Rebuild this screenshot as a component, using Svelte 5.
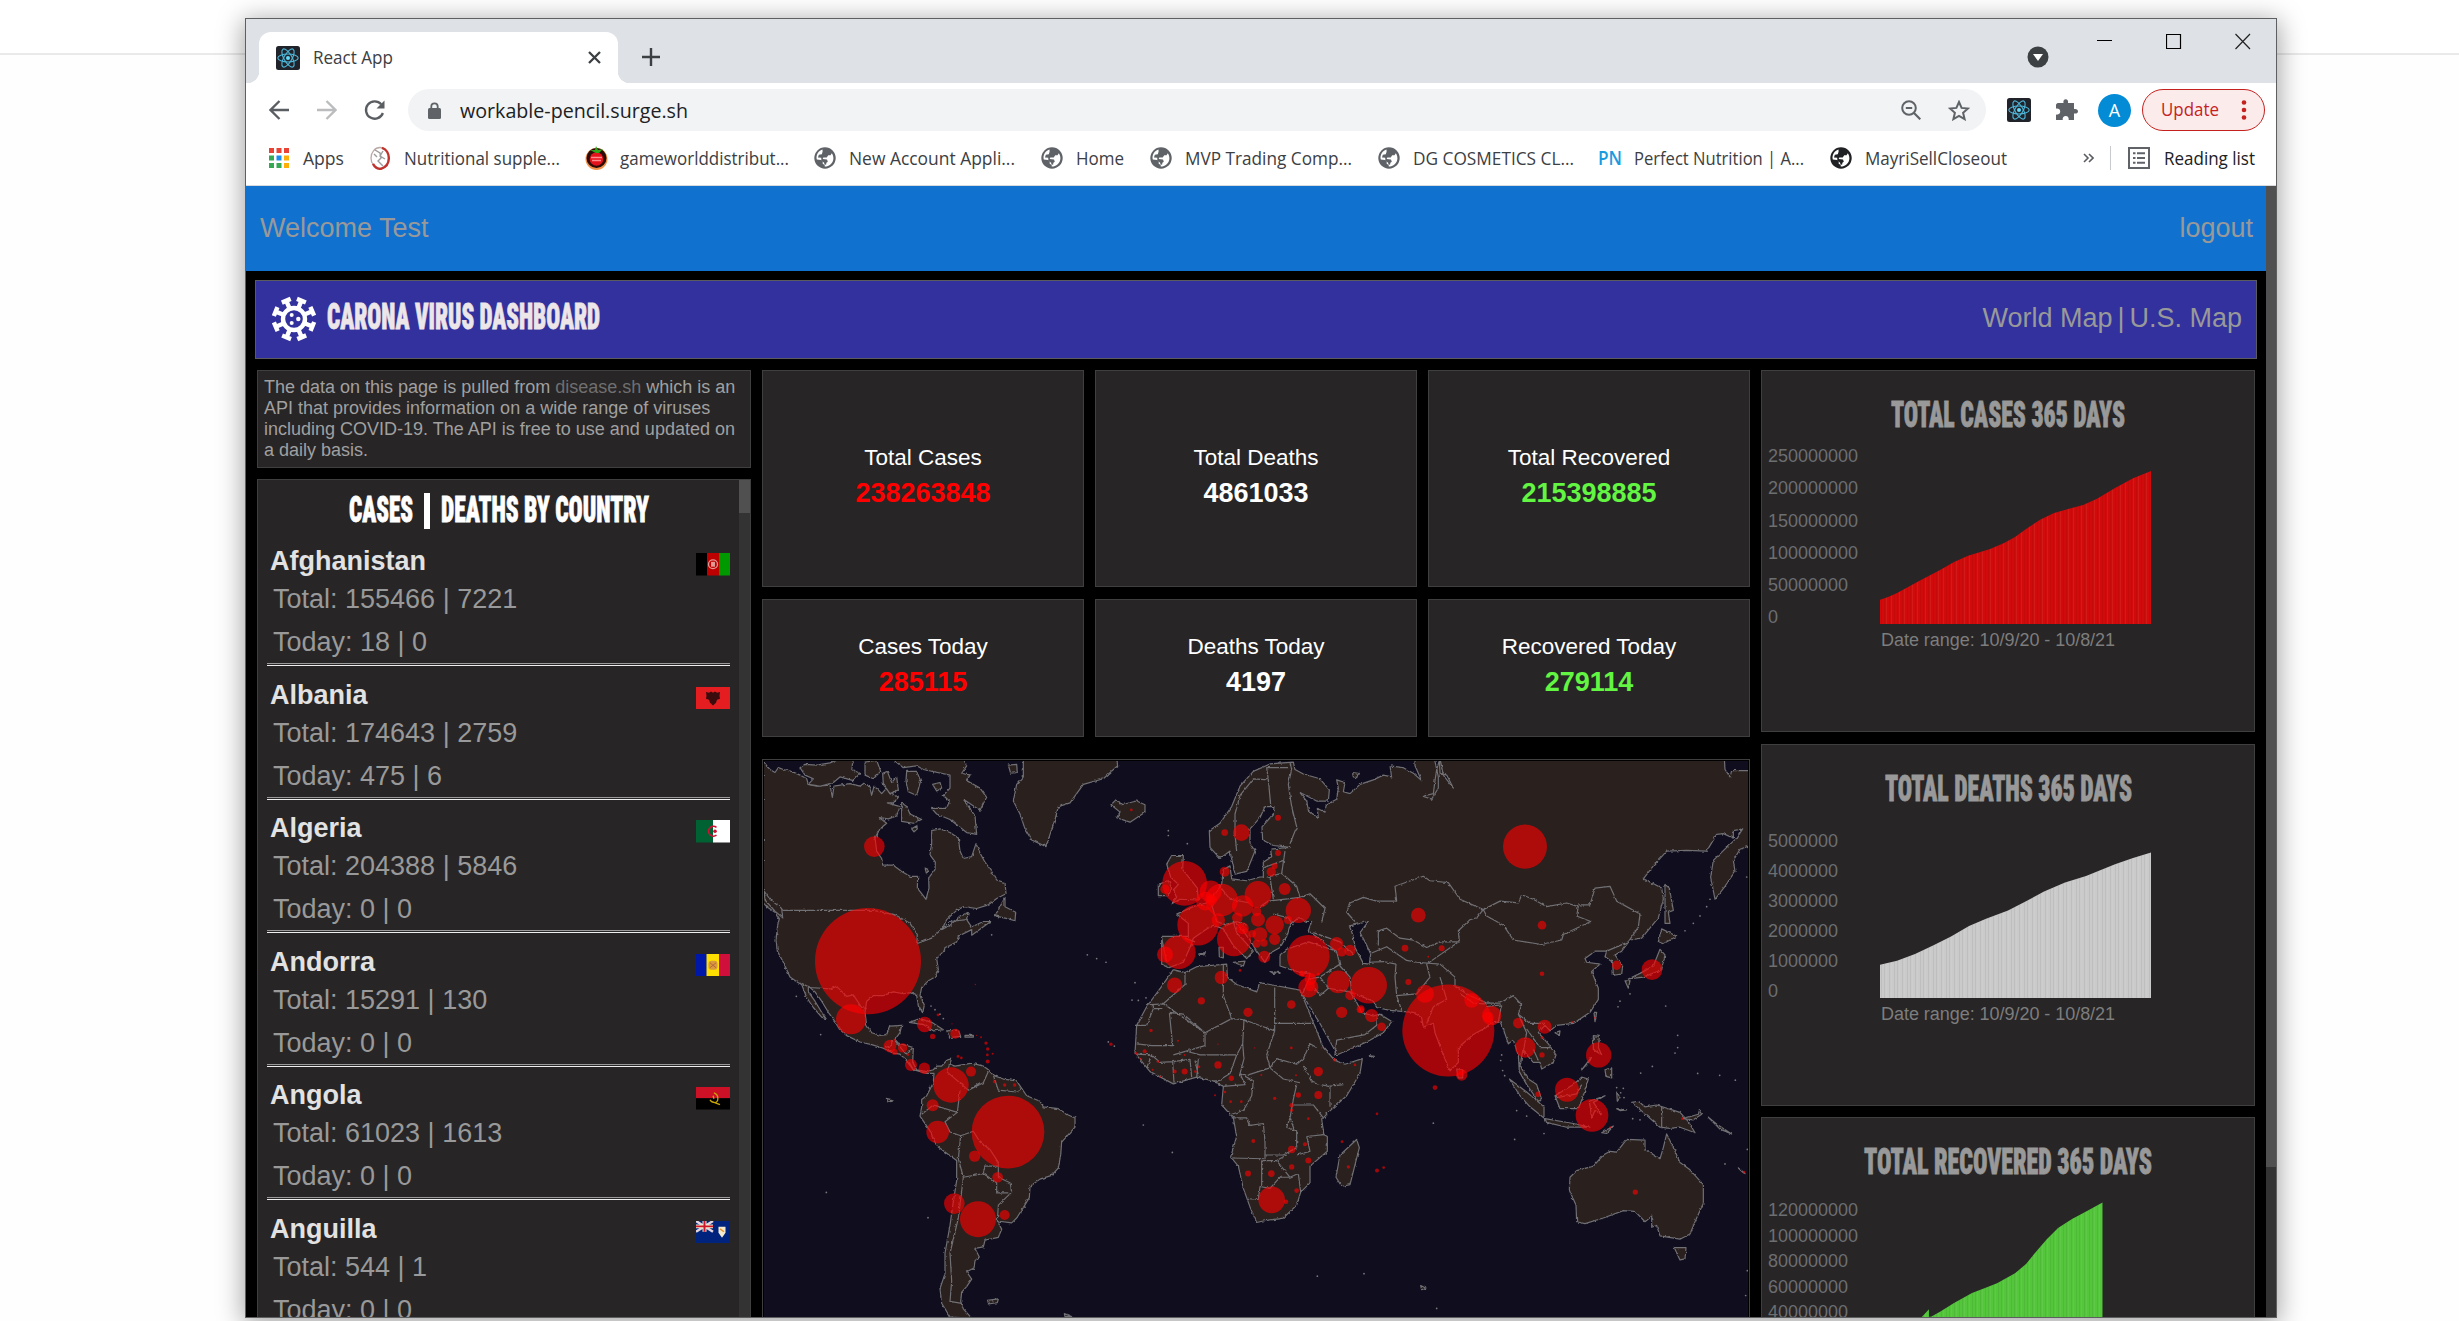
<script>
  const bookmarks = [
    { icon: 'apps', label: 'Apps', width: 41, cell: 101 },
    { icon: 'nutrition', label: 'Nutritional supple...', width: 156, cell: 216 },
    { icon: 'game', label: 'gameworlddistribut...', width: 169, cell: 229 },
    { icon: 'globe', label: 'New Account Appli...', width: 166, cell: 227 },
    { icon: 'globe', label: 'Home', width: 48, cell: 109 },
    { icon: 'globe', label: 'MVP Trading Comp...', width: 167, cell: 228 },
    { icon: 'globe', label: 'DG COSMETICS CL...', width: 161, cell: 221 },
    { icon: 'pn', label: 'Perfect Nutrition | A...', width: 170, cell: 231 },
    { icon: 'earth', label: 'MayriSellCloseout', width: 142, cell: 254 }
  ];

  const countries = [
    { name: 'Afghanistan', total: '155466 | 7221', today: '18 | 0' },
    { name: 'Albania', total: '174643 | 2759', today: '475 | 6' },
    { name: 'Algeria', total: '204388 | 5846', today: '0 | 0' },
    { name: 'Andorra', total: '15291 | 130', today: '0 | 0' },
    { name: 'Angola', total: '61023 | 1613', today: '0 | 0' },
    { name: 'Anguilla', total: '544 | 1', today: '0 | 0' }
  ];

  const stats = [
    { label: 'Total Cases', value: '238263848', tone: 'red' },
    { label: 'Total Deaths', value: '4861033', tone: 'white' },
    { label: 'Total Recovered', value: '215398885', tone: 'green' },
    { label: 'Cases Today', value: '285115', tone: 'red' },
    { label: 'Deaths Today', value: '4197', tone: 'white' },
    { label: 'Recovered Today', value: '279114', tone: 'green' }
  ];

  const charts = [
    {
      title: 'TOTAL CASES 365 DAYS', width: 234, kind: 'cases', step: 32.3,
      labels: ['250000000', '200000000', '150000000', '100000000', '50000000', '0'],
      area: 'M0,153V128.700L8,126 17,122 28,116 39,110 60,99 74,91 88,84.700 110,78 124,72 135,66 146,58 160,48.700 174,42 188,38 203,34 217,27.700 235,17 253,7.300 271,0V153Z'
    },
    {
      title: 'TOTAL DEATHS 365 DAYS', width: 247, kind: 'deaths', step: 30,
      labels: ['5000000', '4000000', '3000000', '2000000', '1000000', '0'],
      area: 'M0,153V119.700L17,115.700 35,109 53,100.500 71,91.500 89,81 106,73.700 128,65.500 146,56.300 164,46.500 185,37.500 206,31 235,19.300 253,13 271,7.500V153Z'
    },
    {
      title: 'TOTAL RECOVERED 365 DAYS', width: 288, kind: 'recovered', step: 25.6,
      labels: ['120000000', '100000000', '80000000', '60000000', '40000000'],
      area: 'M42,98.700 49,91.300V98.700H51L60,93.700 74,85 92,75 105,70 117,65.300 135,55.300 146,46 156,33.700 167,21 178,10 192,1 207,-7 222.500,-15.500V153H0V118Z'
    }
  ];

  // Coastlines, west of the map's centre
  const westLand = [
    'M40,57 52,72 60,80 75,88 85,75 100,80 125,85 150,95 170,105 175,120 200,125 240,122 247,155 252,125 300,118 330,125 345,115 360,130 365,150 372,125 385,135 395,145 410,130 420,145 445,155 430,170 412,170 450,180 440,205 415,213 388,210 410,225 390,240 375,265 380,300 395,320 398,338 430,338 455,355 480,368 503,368 502,400 515,415 528,430 537,400 536,372 555,350 556,330 540,310 545,280 545,245 570,240 600,250 625,265 630,300 640,320 665,315 678,280 690,305 705,330 725,355 740,378 765,385 768,415 740,428 715,445 680,455 640,450 620,460 590,485 575,512 600,500 630,475 655,465 650,485 665,505 700,490 722,490 665,527 665,512 625,530 620,545 600,555 585,560 583,568 560,590 565,620 555,640 535,650 515,668 510,690 523,715 518,737 505,715 500,690 485,682 460,685 430,680 400,690 370,690 350,705 345,735 350,770 365,790 390,797 410,795 420,772 455,770 450,790 435,808 445,818 470,825 490,830 488,870 500,890 530,895 550,890 560,880 575,880 590,865 605,858 600,875 615,880 665,872 700,880 715,890 730,905 760,915 800,920 815,940 830,960 870,975 880,990 925,995 955,1012 975,1020 975,1045 955,1065 935,1085 932,1120 925,1155 905,1175 870,1185 840,1205 838,1235 820,1262 800,1290 785,1303 742,1298 755,1320 745,1342 705,1350 700,1368 675,1372 688,1395 675,1405 672,1425 650,1435 665,1455 650,1475 635,1490 632,1515 640,1535 665,1560 600,1557 575,1520 570,1480 585,1440 585,1385 600,1310 610,1245 620,1190 620,1135 590,1115 560,1095 540,1055 510,1015 515,990 515,970 530,960 550,925 552,900 530,900 490,890 465,860 450,848 430,845 400,832 365,822 330,815 290,798 268,780 255,760 235,735 215,705 195,680 180,668 175,665 175,680 195,705 215,735 228,752 215,748 190,722 170,695 155,660 145,655 120,640 100,600 82,570 78,540 83,500 88,482 75,465 50,450 40,440Z',
    'M150,75 165,66 200,68 240,62 270,50 310,50 305,80 330,90 310,110 270,100 250,115 210,125 175,120 190,105 165,95Z',
    'M425,50 460,75 500,70 520,80 600,95 600,130 580,150 598,165 590,185 545,185 560,200 600,215 650,250 680,255 675,205 640,160 690,190 710,155 690,130 650,110 660,95 635,90 650,70 640,50Z',
    'M470,85 500,85 512,110 500,150 475,140 468,110Z',
    'M345,60 380,55 392,85 370,105 345,95Z', 'M398,90 412,85 425,115 440,100 445,135 420,145 400,120Z',
    'M455,170 470,180 480,200 515,215 490,225 455,220Z', 'M485,240 500,232 502,240 492,248Z', 'M548,120 570,115 575,130 560,138Z',
    'M525,346 535,350 530,362Z',
    'M820,50 820,100 800,120 790,165 810,200 825,240 845,270 888,288 900,255 915,215 925,180 960,170 1000,120 1060,105 1103,70 1100,50Z',
    'M775,68 800,66 802,88 782,90Z',
    'M1083,175 1100,160 1115,175 1160,165 1185,175 1185,195 1140,222 1100,210 1110,195Z',
    'M765,425 735,475 775,483 795,488 797,465 765,450Z',
    'M478,762 510,752 545,762 580,782 550,785 520,768Z', 'M590,785 625,783 632,800 600,803Z', 'M645,797 670,797 670,802 645,802Z',
    'M712,1512 745,1508 742,1518 715,1522Z', 'M408,967 430,972 415,978Z', 'M943,1548 965,1556 945,1556Z',
    'M42,408 60,430 95,455 98,480 75,462 45,432Z',
    'M1265,442 1290,430 1345,432 1342,400 1318,372 1298,350 1300,312 1265,312 1250,335 1262,370 1285,390 1270,405 1280,425Z',
    'M1225,420 1225,390 1255,380 1265,400 1255,420Z',
    'M1407,560 1420,560 1420,588 1408,585Z', 'M1450,600 1485,597 1480,610Z', 'M1346,578 1366,574 1362,580Z',
    'M1270,620 1305,628 1340,612 1430,605 1432,640 1460,660 1520,680 1530,655 1560,660 1650,675 1680,740 1720,830 1755,865 1785,875 1837,860 1830,900 1790,960 1735,1005 1715,1025 1722,1065 1732,1070 1732,1110 1680,1150 1680,1195 1652,1220 1640,1255 1600,1290 1540,1298 1520,1302 1500,1260 1480,1210 1465,1150 1442,1125 1460,1070 1450,1020 1415,985 1420,935 1390,920 1340,910 1270,928 1200,895 1155,845 1160,770 1190,720 1235,665Z'
  ];
  const westBorders = [
    'M97,460H370L435,472 480,495 502,525 500,550 545,535 600,490 650,485',
    'M155,657 180,668 240,672 260,665 290,692 310,688 335,722 350,725', 'M425,810V825L405,830', 'M435,812 470,850 488,830M490,890 478,870',
    'M600,870 590,895 655,945 700,925 715,895M730,905 745,945 800,950 815,940M655,945 690,925M630,945 622,1005 550,985 515,1010M622,1005 585,1030 600,1058 632,1068 670,1056 690,1085 720,1105 745,1140 745,1180 780,1195 785,1220 745,1255 742,1298M632,1068 625,1130 640,1180 700,1170 705,1150 745,1150M640,1180 625,1290 600,1385 605,1460 600,1515 635,1520M700,1170 740,1195 740,1222 775,1222',
    'M1305,628V660L1240,712 1190,715M1420,605V690L1445,752 1365,790 1240,712M1210,715V725H1237M1210,725 1190,770H1155M1258,735 1268,825H1205L1160,820M1258,735 1300,740 1365,790 1365,825 1270,850M1365,790 1445,752 1482,755 1478,820 1460,850 1350,850 1310,840M1160,848 1205,850 1230,870 1268,868 1272,925M1205,850 1190,885M1268,868 1320,862 1325,910M1335,865 1345,905M1345,860 1340,912M1460,850 1440,900 1395,925M1478,820 1482,860 1470,900 1485,930 1420,935M1482,755 1574,785M1574,668V765H1695M1574,765V785L1550,850 1560,885 1490,905M1470,900 1510,920 1505,960 1480,1000 1445,1010M1445,1020H1490L1500,1040 1540,1035 1545,1085V1130L1442,1128M1560,885 1600,915 1650,925M1560,885 1580,860 1640,875 1660,860 1680,820 1700,830M1660,880 1690,925 1735,935 1780,930M1740,935V990M1640,930 1630,970 1620,1020 1632,1050M1630,985 1690,985 1720,1020M1545,1085 1545,1120 1600,1120 1640,1100 1640,1055 1610,1045 1620,1020M1670,1070 1722,1065M1670,1070 1680,1110 1640,1120M1535,1135H1580L1620,1180 1590,1180 1560,1210 1530,1205 1525,1240 1495,1238M1535,1135V1205M1580,1135 1610,1120M1620,1180 1645,1170 1652,1220',
    'M1235,535 1250,600M1305,535 1335,545M1385,445 1400,490 1430,500 1460,490 1490,500M1405,390 1440,430 1500,440'
  ];
  // Coastlines, east of the map's centre; the group that draws them is shifted
  const eastLand = [
    'M-92,245 -60,225 -25,180 0,125 40,85 90,65 160,60 165,80 190,92 240,105 268,135 265,165 230,165 180,142 200,165 205,190 235,212 232,185 255,195 258,175 290,160 295,130 290,108 315,115 310,140 330,145 360,120 400,108 430,95 455,100 450,70 490,75 520,90 545,110 525,70 525,50 583,50 595,100 595,130 575,160 548,152 580,145 585,110 590,80 600,50 610,95 640,130 620,95 600,90 598,50 1453,50 1455,80 1470,100 1475,83 1530,83 1530,285 1500,295 1480,325 1485,355 1455,395 1425,430 1412,370 1420,325 1460,290 1490,265 1508,240 1480,245 1480,265 1450,253 1430,255 1400,300 1340,298 1280,300 1240,340 1210,375 1245,390 1265,400 1270,430 1255,480 1205,535 1170,540 1145,570 1125,580 1148,610 1145,632 1120,635 1118,600 1095,585 1100,570 1065,570 1035,590 1040,600 1080,605 1055,625 1075,670 1075,700 1050,735 1000,765 950,770 930,785 915,770 895,790 925,820 948,850 940,870 905,888 900,870 880,870 860,850 848,840 840,880 865,915 890,930 905,970 895,975 860,930 838,895 835,850 820,810 805,820 790,780 780,760 750,765 740,775 700,795 655,830 655,870 630,893 610,850 585,790 580,765 550,775 545,750 520,735 450,730 410,722 400,705 330,680 345,700 365,735 400,745 420,740 455,760 430,790 380,815 290,850 280,830 240,765 215,730 190,690 185,690 205,650 210,630 180,628 120,610 120,580 140,565 205,545 290,570 250,545 205,515 215,490 200,490 175,480 150,500 140,530 120,560 100,570 90,575 75,600 50,570 30,540 0,505 -20,490 -10,520 40,570 20,590 -20,555 -50,510 -80,500 -100,510 -140,535 -150,560 -170,600 -215,615 -235,605 -235,530 -180,530 -155,530 -155,495 -190,470 -140,450 -100,440 -70,410 -55,390 -50,350 -30,340 -25,375 20,380 60,370 70,370 70,330 95,315 92,295 150,290 100,285 68,270 66,235 100,200 102,180 75,180 60,210 30,240 30,280 45,300 20,355 -15,362 -30,300 -60,320 -90,290Z',
    'M350,1078 358,1100 330,1200 305,1205 288,1180 300,1120Z',
    'M990,1180 1010,1162 1060,1150 1090,1120 1110,1110 1130,1112 1160,1078 1215,1080 1215,1105 1260,1130 1270,1100 1280,1063 1300,1100 1320,1140 1350,1160 1390,1200 1390,1250 1365,1300 1350,1333 1320,1347 1260,1338 1250,1310 1235,1315 1235,1285 1215,1300 1185,1272 1150,1270 1090,1290 1035,1305 1010,1300 1008,1255 988,1215Z',
    'M1303,1370 1338,1370 1335,1400 1320,1403Z',
    'M1175,978 1195,975 1215,990 1250,985 1320,1005 1345,1030 1365,1060 1320,1045 1290,1048 1260,1045 1210,1005Z',
    'M1330,1022 1375,1010 1378,1000 1385,1010 1360,1025Z', 'M1405,1018 1435,1040 1475,1063 1440,1050Z', 'M1495,1155 1515,1170 1510,1168Z',
    'M808,915 860,950 912,990 912,1020 870,990 840,960Z', 'M915,1022 1000,1035 1050,1045 980,1045 920,1032Z',
    'M945,960 1000,930 1025,910 1045,915 1030,960 1015,995 960,995Z', 'M1048,975 1095,960 1060,978 1085,1010 1065,1000 1055,1020Z',
    'M1060,798 1078,800 1075,830 1085,850 1060,835Z', 'M1095,890 1115,885 1115,912 1098,908Z', 'M1025,890 1055,855 1050,865Z',
    'M1130,950 1140,965 1132,975Z', 'M1130,995 1160,998 1140,1000Z', 'M1085,1060 1120,1042 1100,1062Z',
    'M1265,510 1310,530 1270,550 1255,545Z', 'M1260,565 1275,580 1265,620 1210,640 1165,645 1200,630 1240,610Z', 'M1155,650 1170,650 1165,670Z',
    'M1275,390 1288,400 1300,460 1285,465 1290,495 1275,495Z', 'M650,888 668,890 668,912 655,912Z', 'M945,790 960,785 958,797Z', 'M1062,735 1070,735 1065,760Z',
    'M90,625 120,628 100,630Z', 'M180,630 200,625 190,635Z', 'M388,852 400,854 390,856Z', 'M542,1472 560,1480 545,1483Z', 'M338,88 355,90 350,102 340,100Z'
  ];
  const eastBorders = [
    'M150,60 155,80 145,120 155,180 170,235 150,280M-15,255 -15,200 0,150 40,105 85,108 92,175M85,108 80,75 145,75M-10,300 -15,255',
    'M70,345 130,325M75,372 125,360 135,300M125,360 170,395 180,425 85,435 60,450M180,425 210,415 255,455 245,490M100,470 145,480 160,500M90,370 100,430',
    'M220,520 300,545 340,580M290,570 300,610 330,640 335,680M205,645 240,640 300,605M240,640 265,670 330,680M225,670 240,690 265,670M285,850 290,810 375,795 410,770 412,745',
    'M345,490 320,465 330,440 370,425 410,435 470,435 465,395 550,368 570,380 625,385 660,430 730,458 710,480 690,485 655,515 658,545 600,545 560,560 520,540 480,535 440,508 415,515V555M730,458 780,435 835,440 845,418 880,430 920,450 980,440 1015,450 1010,475 1052,490 970,525 965,540 905,552 820,540 790,500 740,475ZM1015,445 1050,445 1065,400 1110,395 1130,435 1200,470 1195,505 1165,545 1100,570M395,575 440,558 500,595 530,600M390,600 430,598 468,605 465,640 470,690 485,730M470,690 530,685 570,640 560,605 655,545M530,600 600,605 645,640 645,665 690,690 740,710 780,710 820,690 845,715 835,740 870,765 915,765M600,640 620,700 580,720 560,765M660,685 700,710 735,712M735,720 785,715 775,760M835,740 860,790 850,840M860,780 900,830 930,830M880,835 895,865M1265,990V1048M950,965 1010,955 1025,930'
  ];
  const caspian = 'M328,502 385,490 360,520 378,550 392,578 388,605 370,603 345,560 340,530Z';

  // [x, y, radius]
  const westBubbles = [
    [354,597,159],[303,754,45],[373,288,31],[603,931,53],[774,1058,109],[563,1058,34],[548,986,18],[663,895,15],[674,1123,17],[743,1180,16],[613,1251,31],[684,1293,54],[764,1282,15],
    [524,768,23],[616,793,15],[548,800,8],[420,826,19],[458,831,14],[483,877,18],[523,886,17],[434,842,9],[474,849,4],[564,742,4],[734,922,5],[764,931,5],[794,931,5],[693,802,3],[708,818,5],[713,834,5],[712,850,4],[713,868,6],[728,847,3],[624,854,4],[634,858,4],[680,797,2],[676,660,2],[606,766,2],[434,810,4],
    [1144,189,4],[1424,250,10],[1474,250,25],[1424,356,15],[1304,387,67],[1245,403,14],[1382,409,33],[1415,432,49],[1366,435,28],[1344,499,62],[1287,573,50],[1245,579,24],[1405,486,20],[1452,538,51],[1478,448,32],[1524,417,40],[1524,485,21],[1478,508,18],[1462,480,16],[1385,432,16],[1543,585,18],[1414,641,20],[1274,662,23],[1354,704,11],[1494,735,14],[1470,622,4],
    [1203,784,5],[1284,812,3],[1404,821,2],[1514,831,2],[1184,840,6],[1158,846,4],[1172,860,3],[1224,868,4],[1208,890,3],[1230,909,3],[1274,895,6],[1304,895,9],[1304,850,3],[1336,895,4],[1347,882,4],[1404,877,11],[1444,913,8],[1425,950,4],[1395,959,3],[1442,976,4],[1474,976,4],[1534,904,3],[1510,1082,6],[1494,1170,9],[1083,821,5]
  ];
  const eastBubbles = [
    [114,210,9],[114,305,9],[104,340,9],[94,356,14],[134,402,18],[175,460,38],[104,499,28],[144,486,12],[60,525,22],[104,538,17],[37,523,11],[50,550,12],[72,548,11],[50,463,14],[205,584,64],[290,550,20],[330,568,17],[305,572,14],[295,653,34],[386,662,55],[205,668,30],[212,645,18],[210,665,15],[186,630,9],[331,689,15],[235,632,5],[362,727,12],[363,729,9],[395,744,20],[425,774,13],[305,735,17],[154,714,13],
    [495,562,10],[535,473,22],[605,562,9],[565,585,3],[505,653,9],[555,685,27],[625,784,138],[695,703,22],[755,744,29],[745,748,16],[665,904,17],[663,902,8],[585,938,7],[835,764,16],[856,830,31],[914,774,21],[906,850,8],[906,803,4],[906,631,7],[906,500,13],[855,288,66],[1130,608,14],[1236,620,31],[1076,850,38],[981,944,36],[1056,1013,49],[894,956,8],[996,761,3],[1065,750,3],[1111,1045,3],[1186,1220,8],[1327,1022,4],[1512,1166,4],
    [154,831,4],[168,905,3],[235,895,14],[284,863,5],[345,877,4],[245,831,2],[335,832,2],[235,958,12],[175,958,8],[104,967,5],[155,986,7],[155,999,5],[205,1022,4],[195,1091,6],[155,1105,11],[155,1152,8],[205,1135,9],[94,1170,10],[170,1216,7],[95,1241,40],[138,1246,7],[325,1152,5],[411,1162,6],[431,1154,4],[411,1009,4],[306,1084,4]
  ];
  const specks = [[1012,580],[1040,590],[1068,600],[1155,655],[1146,702],[1165,703],[1188,696],[139,692],[212,795],[229,1221],[534,1289],[725,526],[1180,1039],[1267,1113],[1255,245],[1255,258],[1312,280],[1075,815],[1093,826],[543,718],[555,728],[570,740],[580,752],
    [1702,1447],[1842,1440],[2060,1534],[2050,1034],[2294,1078],[2382,1062],[2747,718],[2783,797],[2783,830],[2775,845],[2707,881],[2672,899],[2843,900],[2909,905],[2956,918],[2255,850],[2252,865],[2258,892],[2264,906],[2604,720],[2610,705],[2640,685],[2880,430],[2870,450],[2850,475],[2830,495],[2805,515],[2990,370],[2992,1105],[2992,1432],[2987,1499],[2925,1144],[2600,938],[2620,940],[2612,952],[2622,965],[2300,1000],[2330,1015],[2648,1022],[2670,1025]];
</script>

{#snippet fit(text, width, size, base, height, kind)}
  <svg class="fit {kind}" {width} {height}>
    <text x="0" y={base} font-size={size} textLength={width} lengthAdjust="spacingAndGlyphs">{text}</text>
  </svg>
{/snippet}

{#snippet atom(size)}
  <svg width={size} height={size} viewBox="0 0 24 24">
    <rect width="24" height="24" rx="2.5" fill="#20232a" />
    <g fill="none" stroke="#4fb9dc" stroke-width="1.1">
      <ellipse cx="12" cy="12" rx="10.2" ry="4" />
      <ellipse cx="12" cy="12" rx="10.2" ry="4" transform="rotate(60 12 12)" />
      <ellipse cx="12" cy="12" rx="10.2" ry="4" transform="rotate(120 12 12)" />
    </g>
    <circle cx="12" cy="12" r="2" fill="#61dafb" />
  </svg>
{/snippet}

{#snippet globe(color)}
  <svg width="22" height="22" viewBox="0 0 22 22">
    <circle cx="11" cy="11" r="10.7" fill={color} />
    <path d="M8.5 2.6C5 3.600 2.500 7 2.500 11l.3 1.500 4.200.5 1.700 1.800v2l2 1.200v1.600c4.500 0 8.600-3.500 8.700-8.400 0-2-.7-3.800-1.600-5l-1.300 2h-2.300l-1.500 2.300H9.300l-.6 1.500 4.300.5.8 2.200-1.400 1.100-.3 1.900-1.600-.1-.4-1.800-2.700-2.300-.2-2.700L4 10.500l.8-2.800 3-.4.8-2.500z" fill="#fff" />
  </svg>
{/snippet}

{#snippet bookmarkIcon(kind)}
  {#if kind === 'apps'}
    <svg width="20" height="20" viewBox="0 0 20 20">
      <path d="M0 0h5v5H0zM7.500 0h5v5h-5zM15 0h5v5h-5z" fill="#ea4335" />
      <path d="M0 7.500h5v5H0zM0 15h5v5H0zM7.500 15h5v5h-5z" fill="#34a853" />
      <path d="M7.500 7.500h5v5h-5z" fill="#1a8cf0" /><path d="M15 7.500h5v5h-5zM15 15h5v5h-5z" fill="#fbaf08" />
    </svg>
  {:else if kind === 'nutrition'}
    <svg width="22" height="24" viewBox="0 0 22 24">
      <ellipse cx="11" cy="12" rx="9" ry="10.500" fill="#fff" stroke="#b9a9a7" stroke-width="1.300" />
      <path d="M13 1.800c9 3 9.500 18-1 21-3.500.4-6-1.500-8-5" fill="none" stroke="#c0332c" stroke-width="2.400" />
      <path d="M6 4l5 3 1 5-3 3 5 5M14 5l-3 5 5 3M5 8l3 3" fill="none" stroke="#9b9b9b" stroke-width="1.400" />
    </svg>
  {:else if kind === 'game'}
    <svg width="23" height="24" viewBox="0 0 23 24">
      <circle cx="11.500" cy="13" r="11" fill="#f0914a" /><circle cx="11.500" cy="12" r="10" fill="#2a0c08" />
      <circle cx="11.500" cy="13" r="6.800" fill="#e4131b" /><path d="M6 11.500h11M7 14.500h9" stroke="#ff8d8d" stroke-width="1.300" />
      <path d="M11 7L5 4l5 0 1-4 2 4 5-1-4 4z" fill="#2ea31c" />
    </svg>
  {:else if kind === 'pn'}
    {@render fit('PN', 24, 19, 19, 24, 'pn')}
  {:else if kind === 'earth'}
    {@render globe('#202124')}
  {:else}
    {@render globe('#5f6368')}
  {/if}
{/snippet}

{#snippet flag(name)}
  <svg class="flag" width="34" height="22.500" viewBox="0 0 34 23" preserveAspectRatio="none">
    {#if name === 'Afghanistan'}
      <path d="M0 0h11.500v23H0z" /><path d="M11 0h12v23H11z" fill="#bf0000" /><path d="M23 0h11v23H23z" fill="#009a00" />
      <circle cx="17" cy="11.500" r="4.500" fill="none" stroke="#e29a94" stroke-width="1.300" /><path d="M15 9h4v5h-4z" fill="#e29a94" />
    {:else if name === 'Albania'}
      <path d="M0 0h34v23H0z" fill="#e41e20" /><path d="M10 5l3 1 2-1.500 2 1.500 2-1.500 2 1.500 3-1-.5 4 .5 3-3 1-1 3-3 3-3-3-1-3-3-1 .5-3z" fill="#3a0c0d" />
    {:else if name === 'Algeria'}
      <path d="M0 0h17v23H0z" fill="#006233" /><path d="M17 0h17v23H17z" fill="#fff" />
      <path d="M20.500 7.500a5 5 0 1 0 0 8" fill="none" stroke="#d21034" stroke-width="1.600" /><circle cx="19" cy="11.500" r="1.800" fill="#d21034" />
    {:else if name === 'Andorra'}
      <path d="M0 0h11v23H0z" fill="#0018a8" /><path d="M10.500 0H23v23H10.500z" fill="#fedf00" /><path d="M23 0h11v23H23z" fill="#d0103a" />
      <rect x="12.500" y="7" width="9" height="9" rx="3" fill="#d99a3e" /><path d="M14 9l6 5m0-5l-6 5" stroke="#b5653c" />
    {:else if name === 'Angola'}
      <path d="M0 0h34v11.500H0z" fill="#cc1126" /><path d="M0 11.500h34V23H0z" />
      <path d="M18 6c5 2 5 9 1 10-3 0-4-1-5-3m3-4l1 3m-2 3l8 3" fill="none" stroke="#c9a800" stroke-width="1.300" />
    {:else}
      <path d="M0 0h34v23H0z" fill="#00247d" /><path d="M0 0l17 11M17 0L0 11" stroke="#e4d5de" stroke-width="2.500" />
      <path d="M8.500 0v11M0 5.500h17" stroke="#eec" stroke-width="4" /><path d="M8.500 0v11M0 5.500h17" stroke="#cf142b" stroke-width="2" />
      <path d="M22.500 6h7v6l-3.500 5-3.500-5z" fill="#f3ead0" /><path d="M24 8l4 3" stroke="#e8962c" stroke-width="1.500" />
    {/if}
  </svg>
{/snippet}

<div class="desktop">
  <div class="window">
    <div class="tabstrip">
      <div class="tab">
        {@render atom(24)}
        {@render fit('React App', 80, 18, 19, 26, 'tabtext')}
        <svg class="tabclose" width="13" height="13" viewBox="0 0 13 13"><path d="M1 1l11 11M12 1L1 12" stroke="#3c4043" stroke-width="2.300" /></svg>
      </div>
      <svg class="plus" width="18" height="18" viewBox="0 0 18 18"><path d="M9 0v18M0 9h18" stroke="#3c4043" stroke-width="2.400" /></svg>
      <svg class="search-tabs" width="22" height="22" viewBox="0 0 22 22"><circle cx="11" cy="11" r="10.500" fill="#3c4043" /><path d="M6 8h10l-5 7z" fill="#fff" /></svg>
      <div class="controls">
        <svg width="16" height="17" viewBox="0 0 16 17"><path d="M0 7.500h15" stroke="#000" /></svg>
        <svg width="16" height="17" viewBox="0 0 16 17"><path d="M.5 1.500h14v14H.5z" fill="none" stroke="#000" stroke-width="1.200" /></svg>
        <svg width="16" height="17" viewBox="0 0 16 17"><path d="M.5 1l14.500 15M15 1L.5 16" stroke="#222" stroke-width="1.200" /></svg>
      </div>
    </div>

    <div class="toolbar">
      <svg width="20" height="20" viewBox="0 0 20 20"><path d="M10.500 1L1.500 10l9 9M1.500 10H20" fill="none" stroke="#5a5d61" stroke-width="2.300" /></svg>
      <svg width="20" height="20" viewBox="0 0 20 20"><path d="M9.500 1l9 9-9 9M18.500 10H0" fill="none" stroke="#babcbe" stroke-width="2.300" /></svg>
      <svg width="21" height="21" viewBox="0 0 21 21"><path d="M17.200 4.200A8.700 8.700 0 1 0 18.900 13" fill="none" stroke="#5a5d61" stroke-width="2.300" /><path d="M20.500.5v8h-8z" fill="#5a5d61" /></svg>
      <div class="omnibox">
        <svg class="lock" width="13" height="17" viewBox="0 0 13 17"><path d="M3.300 7V4.500a3.200 3.200 0 0 1 6.400 0V7" fill="none" stroke="#5f6368" stroke-width="1.800" /><rect y="6" width="13" height="11" rx="1.500" fill="#5f6368" /></svg>
        {@render fit('workable-pencil.surge.sh', 228, 20.5, 24, 32, 'url')}
        <svg class="zoom" width="20" height="20" viewBox="0 0 20 20"><circle cx="8" cy="8" r="6.800" fill="none" stroke="#5f6368" stroke-width="2" /><path d="M4.800 8h6.400M13 13l6.300 6.300" stroke="#5f6368" stroke-width="2.200" /></svg>
        <svg width="22" height="21" viewBox="0 0 22 21"><path d="M11 2l2.600 5.900 6.400.6-4.900 4.300 1.500 6.300L11 15.800l-5.600 3.300 1.500-6.300L2 8.500l6.400-.6z" fill="none" stroke="#5f6368" stroke-width="2" /></svg>
      </div>
      {@render atom(24)}
      <svg class="puzzle" width="22" height="22" viewBox="0 0 22 22"><path d="M2 4h5.500C7 1.500 8 .2 9.700.2S12.500 1.500 12 4H18v6c2.500-.5 4 .6 4 2.200s-1.500 2.800-4 2.300V21h-5.300c.3-2.600-1-4-3-4s-3.300 1.400-3 4H0v-5.400c2.800.3 4.200-1 4.200-3S2.800 9.300 0 9.600V6c0-1 1-2 2-2z" fill="#5f6368" /></svg>
      <div class="avatar">A</div>
      <div class="update">
        {@render fit('Update', 58, 18.5, 20, 28, 'updatetext')}
        <svg width="6" height="20" viewBox="0 0 6 20"><circle cx="3" cy="2.500" r="2.300" /><circle cx="3" cy="10" r="2.300" /><circle cx="3" cy="17.500" r="2.300" /></svg>
      </div>
    </div>

    <div class="bookmarks">
      {#each bookmarks as b}
        <div class="bookmark" style:width="{b.cell}px">
          <span class="bicon">{@render bookmarkIcon(b.icon)}</span>
          {@render fit(b.label, b.width, 18, 20.5, 28, 'mark')}
        </div>
      {/each}
      <svg width="11" height="10" viewBox="0 0 11 10"><path d="M1 1l4 4-4 4M6 1l4 4-4 4" fill="none" stroke="#5a5d61" stroke-width="1.600" /></svg>
      <span class="separator"></span>
      <svg class="listicon" width="22" height="22" viewBox="0 0 22 22"><path d="M1 1h20v20H1z" fill="none" stroke="#5f6368" stroke-width="2" /><path d="M5 6.300h2.500M9 6.300h8M5 11h2.500M9 11h8M5 15.700h2.500M9 15.700h8" stroke="#5f6368" stroke-width="2" /></svg>
      {@render fit('Reading list', 91, 18, 20.5, 28, 'mark dark')}
    </div>

    <div class="viewport">
      <div class="page">
        <header class="welcome"><span>Welcome Test</span><span>logout</span></header>
        <div class="banner">
          <svg class="virus" width="46" height="46" viewBox="-23 -23 46 46">
            <g stroke="#fff" fill="none">
              <circle r="11" stroke-width="4.400" />
              {#each [0, 45, 90, 135, 180, 225, 270, 315] as a}
                <path d="M0-12V-21M-4.800-19.800h9.600" stroke-width="4.400" transform="rotate({a + 22})" />
              {/each}
            </g>
            <g fill="#fff"><circle cx="-2.300" cy="-4" r="2" /><circle cx="4.300" cy="0" r="2.200" /><circle cx="-2.300" cy="4" r="2" /></g>
          </svg>
          {@render fit('CARONA VIRUS DASHBOARD', 273, 36, 31, 42, 'title pale')}
          <nav><span>World Map</span><i>|</i><span>U.S. Map</span></nav>
        </div>

        <div class="columns">
          <div class="left">
            <p class="card info">The data on this page is pulled from <a>disease.sh</a> which is an API that provides information on a wide range of viruses including COVID-19. The API is free to use and updated on a daily basis.</p>
            <div class="card list">
              <div class="listbody">
                <div class="listtitle">
                  {@render fit('CASES', 64, 36, 30, 42, 'title bright')}
                  <span class="bar"></span>
                  {@render fit('DEATHS BY COUNTRY', 208, 36, 30, 42, 'title bright')}
                </div>
                {#each countries as c}
                  <div class="country">
                    <div class="name"><b>{c.name}</b>{@render flag(c.name)}</div>
                    <div class="line total">Total: {c.total}</div>
                    <div class="line today">Today: {c.today}</div>
                    <div class="rule"></div>
                  </div>
                {/each}
              </div>
              <div class="scroll"><div class="thumb"></div></div>
            </div>
          </div>

          <div class="middle">
            <div class="stats">
              {#each stats as s}
                <div class="card stat"><span>{s.label}</span><b class={s.tone}>{s.value}</b></div>
              {/each}
            </div>
            <div class="mapcard">
              <svg class="map" width="984" height="556" viewBox="42 57 2952 1500" preserveAspectRatio="none">
                <defs>
                  <filter id="coast" x="0" y="0" width="100%" height="100%" color-interpolation-filters="sRGB">
                    <feTurbulence type="fractalNoise" baseFrequency="0.09" numOctaves="2" seed="4" />
                    <feDisplacementMap in="SourceGraphic" scale="8" xChannelSelector="R" yChannelSelector="G" />
                  </filter>
                </defs>
                <rect x="42" y="57" width="2952" height="1500" fill="#100e1e" />
                <g class="land" filter="url(#coast)">
                  {#each westLand as d}<path {d} />{/each}
                  <g transform="translate(1470 0)">
                    {#each eastLand as d}<path {d} />{/each}
                    <path class="sea" d={caspian} />
                    {#each eastBorders as d}<path class="border" {d} />{/each}
                  </g>
                  {#each westBorders as d}<path class="border" {d} />{/each}
                </g>
                {#each specks as [x, y]}<ellipse cx={x} cy={y} rx="2.600" ry="2.300" fill="#77777c" />{/each}
                <g class="bubbles">
                  {#each westBubbles as [x, y, r]}<ellipse cx={x} cy={y} rx={r} ry={r * 0.9} />{/each}
                  {#each eastBubbles as [x, y, r]}<ellipse cx={x + 1470} cy={y} rx={r} ry={r * 0.9} />{/each}
                </g>
              </svg>
            </div>
          </div>

          <div class="right">
            {#each charts as c}
              <div class="card chart">
                <div class="charttitle">{@render fit(c.title, c.width, 36, 31, 40, 'title grey')}</div>
                <div class="plot">
                  <div class="axis {c.kind}">
                    {#each c.labels as l}<span style:height="{c.step}px">{l}</span>{/each}
                  </div>
                  <div class="bars">
                    <svg class={c.kind} width="272" height="181" viewBox="0 -28 272 181">
                      <defs>
                        <pattern id="bars-{c.kind}" width="13" height="10" patternUnits="userSpaceOnUse">
                          <path d="M1.500 0v10M4.500 0v10M9.500 0v10" stroke="#000" stroke-width="1" opacity=".06" />
                          <path d="M6.500 0v10M11.500 0v10" stroke="#fff" stroke-width="1" opacity=".06" />
                        </pattern>
                      </defs>
                      <path class="fillarea" d={c.area} /><path d={c.area} fill="url(#bars-{c.kind})" />
                    </svg>
                    <span class="range">Date range: 10/9/20 - 10/8/21</span>
                  </div>
                </div>
              </div>
            {/each}
          </div>
        </div>
      </div>
      <div class="pagescroll"><div class="pagethumb"></div></div>
    </div>
  </div>
</div>

<style>
  :global(body) { margin: 0; background: #fff; overflow: hidden; }
  .desktop {
    box-sizing: border-box; width: 2459px; height: 1321px; padding: 18px 0 0 245px; overflow: hidden;
    background: linear-gradient(#fff 0 53px, #e9e9e9 53px 55px, #fefefe 55px);
    font-family: 'Liberation Sans', Arial, sans-serif;
  }
  svg { display: block; flex: none; }
  .window {
    box-sizing: border-box; width: 2032px; height: 1300px; border: 1px solid #5e5f61; background: #fff;
    display: flex; flex-direction: column; overflow: hidden; box-shadow: 0 4px 24px 2px rgba(0, 0, 0, .36);
  }
  .fit { overflow: visible; font-family: 'Open Sans', 'Noto Sans', sans-serif; fill: #3c4043; }
  .pn { font-weight: 600; fill: #1a9be0; }
  .url, .dark { fill: #202124; }
  .updatetext, .update svg { fill: #c5221f; }
  .title { font-family: Roboto, 'Liberation Sans', sans-serif; font-weight: 900; font-stretch: 75%; stroke-width: .8px; }
  .pale { fill: #ece6e8; stroke: #ece6e8; }
  .bright { fill: #fff; stroke: #fff; }
  .grey { fill: #999; stroke: #999; }

  .tabstrip { height: 64px; flex: none; background: #dee1e6; display: flex; box-sizing: border-box; padding: 13px 25px 0 13px; align-items: flex-start; }
  .tab {
    position: relative; box-sizing: border-box; width: 359px; height: 51px; background: #fff; border-radius: 12px 12px 0 0;
    display: flex; align-items: center; padding: 0 17px; gap: 13px;
  }
  .tab::before, .tab::after { content: ''; position: absolute; bottom: 0; width: 12px; height: 12px; }
  .tab::before { left: -12px; background: radial-gradient(circle at 0 0, transparent 12px, #fff 12.5px); }
  .tab::after { right: -12px; background: radial-gradient(circle at 100% 0, transparent 12px, #fff 12.5px); }
  .tabclose { margin-left: auto; }
  .plus { margin: 16px 0 0 24px; }
  .search-tabs { margin: 14px 48px 0 auto; }
  .controls { display: flex; gap: 53px; margin-top: 1px; }

  .toolbar { height: 54px; flex: none; display: flex; align-items: center; padding-left: 23px; }
  .toolbar > svg:nth-of-type(2) { margin-left: 28px; }
  .toolbar > svg:nth-of-type(3) { margin-left: 27px; }
  .omnibox { box-sizing: border-box; width: 1578px; height: 42px; margin: 0 21px 0 23px; padding: 0 16px 0 20px; border-radius: 21px; background: #f1f3f4; display: flex; align-items: center; }
  .lock { margin-right: 19px; }
  .zoom { margin: 0 27px 0 auto; }
  .puzzle { margin-left: 25px; }
  .avatar { width: 33px; height: 33px; margin-left: 20px; border-radius: 50%; background: #038bd6; color: #fff; font: 18px/33px 'Open Sans', sans-serif; text-align: center; }
  .update { box-sizing: border-box; width: 123px; height: 42px; margin-left: 11px; padding: 0 17px 0 18px; border: 1.500px solid #c5221f; border-radius: 21px; background: #fbeceb; display: flex; align-items: center; justify-content: space-between; }

  .bookmarks { height: 49px; flex: none; padding-left: 21px; box-sizing: border-box; border-bottom: 1px solid #d8dadd; display: flex; align-items: center; padding-bottom: 6px; }
  .bookmark { display: flex; align-items: center; flex: none; }
  .bicon { width: 24px; margin-right: 12px; display: flex; justify-content: center; }
  .separator { width: 1px; height: 24px; margin: 0 17px 0 16px; background: #c8cacd; }
  .listicon { margin-right: 14px; }

  .viewport { display: flex; flex: 1; min-height: 0; background: #000; }
  .page { width: 2020px; }
  .pagescroll { width: 10px; background: #333; }
  .pagethumb { height: 981px; background: #505050; }
  .welcome { box-sizing: border-box; height: 85px; padding: 0 13px 0 14px; background: #1171cf; color: #999; font-size: 27px; line-height: 84px; display: flex; justify-content: space-between; }
  .banner { box-sizing: border-box; height: 79px; width: 2002px; margin: 9px 0 11px 9px; border: 1px solid #5b5a5f; background: #32319d; display: flex; align-items: center; padding: 0 14px 2px 15px; }
  .banner .fit { margin-left: 10px; }
  .banner nav { margin-left: auto; color: #999; font-size: 27px; display: flex; align-items: center; }
  .banner i { width: 17px; text-align: center; font-style: normal; }

  .columns { display: flex; gap: 11px; padding-left: 11px; height: 960px; }
  .card { box-sizing: border-box; background: #272526; border: 1px solid #3f3f3f; }
  .left { width: 494px; }
  .info { height: 98px; margin: 0 0 11px; padding: 6px 10px 0 6px; color: #a0a0a0; font-size: 18px; line-height: 21px; }
  .info a { color: #6f6f6f; }
  .list { height: 860px; display: flex; }
  .listbody { flex: 1; padding: 0 9px; }
  .scroll { width: 11px; background: #333; }
  .thumb { height: 33px; background: #505050; }
  .listtitle { display: flex; justify-content: center; padding: 12px 0 12px; }
  .bar { width: 6px; height: 36px; margin: 1px 11px 0; background: #fff; }
  .country { height: 133.500px; font-size: 27px; line-height: 31px; color: #999; }
  .name { display: flex; justify-content: space-between; align-items: center; padding-left: 3px; height: 31px; color: #e2e2e2; }
  .flag { margin-top: 6px; }
  .line { padding-left: 6px; }
  .total { margin-top: 7px; }
  .today { margin-top: 12px; }
  .rule { height: 1px; margin-top: 5px; border-top: 1px solid #9a9a9a; border-bottom: 1px solid #eee; }

  .middle { width: 988px; }
  .stats { display: grid; grid-template-columns: repeat(3, 322px); grid-template-rows: 217px 138px; gap: 12px 11px; }
  .stat { display: flex; flex-direction: column; align-items: center; justify-content: center; color: #fff; font-size: 22.500px; line-height: 26px; padding-bottom: 4px; }
  .stat b { margin-top: 7px; font-size: 27px; line-height: 31px; }
  .red { color: #f00; }
  .white { color: #fff; }
  .green { color: #62f542; }
  .mapcard { box-sizing: border-box; margin-top: 22px; height: 580px; padding: 1px; border: 1px solid #3f3f3f; }
  .land path { fill: #2a201e; stroke: #707075; stroke-width: 1.200px; vector-effect: non-scaling-stroke; stroke-linejoin: round; }
  .land .border { fill: none; }
  .land .sea { fill: #100e1e; }
  .bubbles ellipse { fill: #f00; fill-opacity: .62; }

  .right { width: 494px; display: flex; flex-direction: column; gap: 11.500px; }
  .chart { height: 362px; flex: none; padding-left: 6px; }
  .charttitle { display: flex; justify-content: center; padding: 25px 6px 0 0; height: 40px; }
  .plot { display: flex; }
  .axis { width: 112px; padding-top: 10px; color: #6c6e70; font-size: 18px; }
  .axis span { display: block; line-height: 21px; }
  .axis.deaths { padding-top: 21px; }
  .axis.recovered { padding-top: 17px; }
  .bars { padding-top: 7px; }
  .fillarea { fill: #d10b0b; }
  .deaths .fillarea { fill: #cacaca; }
  .recovered .fillarea { fill: #54c63b; }
  .range { display: block; margin: 6px 0 0 1px; color: #7d7d7d; font-size: 18px; letter-spacing: -.04px; line-height: 21px; }
</style>
